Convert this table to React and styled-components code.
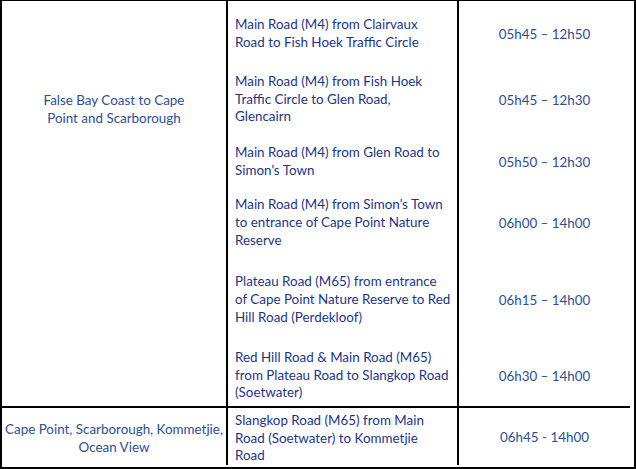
import React from "react";
import styled, { createGlobalStyle } from "styled-components";

const Global = createGlobalStyle`
  html, body { margin: 0; padding: 0; background: #ffffff; }
  body { font-family: Lato, "Liberation Sans", sans-serif; }
`;

const Table = styled.div`
  display: grid;
  grid-template-columns: 226px 231px 171px;
  grid-template-rows: 65px 67px 58px 64px 90px 63px 57px;
  width: 636px;
  height: 469px;
  box-sizing: border-box;
  border-top: 1px solid #000;
  border-left: 2px solid #000;
  border-right: 2px solid #000;
  border-bottom: 2px solid #000;
  font-size: 13.4px;
  white-space: nowrap;
`;

const RegionCell = styled.div`
  grid-column: 1;
  grid-row: ${(p) => p.$rows};
  border-right: 2px solid #000;
  border-bottom: ${(p) => (p.$divider ? "2px solid #000" : "none")};
  display: flex;
  justify-content: center;
  align-items: ${(p) => (p.$top ? "flex-start" : "center")};
  padding-top: ${(p) => p.$pt || 0}px;
  text-align: center;
  color: #2c4f92;
  line-height: 18px;
`;

const RouteCell = styled.div`
  grid-column: 2;
  grid-row: ${(p) => p.$row};
  border-right: 2px solid #000;
  border-bottom: ${(p) => (p.$divider ? "2px solid #000" : "none")};
  display: flex;
  align-items: ${(p) => (p.$top ? "flex-start" : "center")};
  padding: ${(p) => p.$pt || 0}px 4px 0 7px;
  color: #1c3585;
  line-height: 17.7px;
`;

const TimeCell = styled.div`
  grid-column: 3;
  grid-row: ${(p) => p.$row};
  border-bottom: ${(p) => (p.$divider ? "2px solid #000" : "none")};
  display: flex;
  align-items: center;
  justify-content: center;
  color: #2c4f92;
  line-height: 18px;
`;

const rows = [
  { route: ["Main Road (M4) from Clairvaux", "Road to Fish Hoek Traffic Circle"], time: "05h45 – 12h50" },
  { route: ["Main Road (M4) from Fish Hoek", "Traffic Circle to Glen Road,", "Glencairn"], time: "05h45 – 12h30" },
  { route: ["Main Road (M4) from Glen Road to", "Simon’s Town"], time: "05h50 – 12h30" },
  { route: ["Main Road (M4) from Simon’s Town", "to entrance of Cape Point Nature", "Reserve"], time: "06h00 – 14h00" },
  { route: ["Plateau Road (M65) from entrance", "of Cape Point Nature Reserve to Red", "Hill Road (Perdekloof)"], time: "06h15 – 14h00" },
  { route: ["Red Hill Road & Main Road (M65)", "from Plateau Road to Slangkop Road", "(Soetwater)"], time: "06h30 – 14h00", divider: true },
];

const Lines = ({ lines }) => (
  <div>
    {lines.map((l, i) => (
      <React.Fragment key={i}>
        {l}
        {i < lines.length - 1 && <br />}
      </React.Fragment>
    ))}
  </div>
);

export default function App() {
  return (
    <>
      <Global />
      <Table>
        <RegionCell $rows="1 / 7" $divider $top $pt={90}>
          <Lines lines={["False Bay Coast to Cape", "Point and Scarborough"]} />
        </RegionCell>
        {rows.map((r, i) => (
          <React.Fragment key={i}>
            <RouteCell $row={i + 1} $divider={r.divider}>
              <Lines lines={r.route} />
            </RouteCell>
            <TimeCell $row={i + 1} $divider={r.divider}>
              {r.time}
            </TimeCell>
          </React.Fragment>
        ))}
        <RegionCell $rows="7" $pt={3}>
          <Lines lines={["Cape Point, Scarborough, Kommetjie,", "Ocean View"]} />
        </RegionCell>
        <RouteCell $row={7} $top $pt={4}>
          <Lines lines={["Slangkop Road (M65) from Main", "Road (Soetwater) to Kommetjie", "Road"]} />
        </RouteCell>
        <TimeCell $row={7}>06h45 - 14h00</TimeCell>
      </Table>
    </>
  );
}
